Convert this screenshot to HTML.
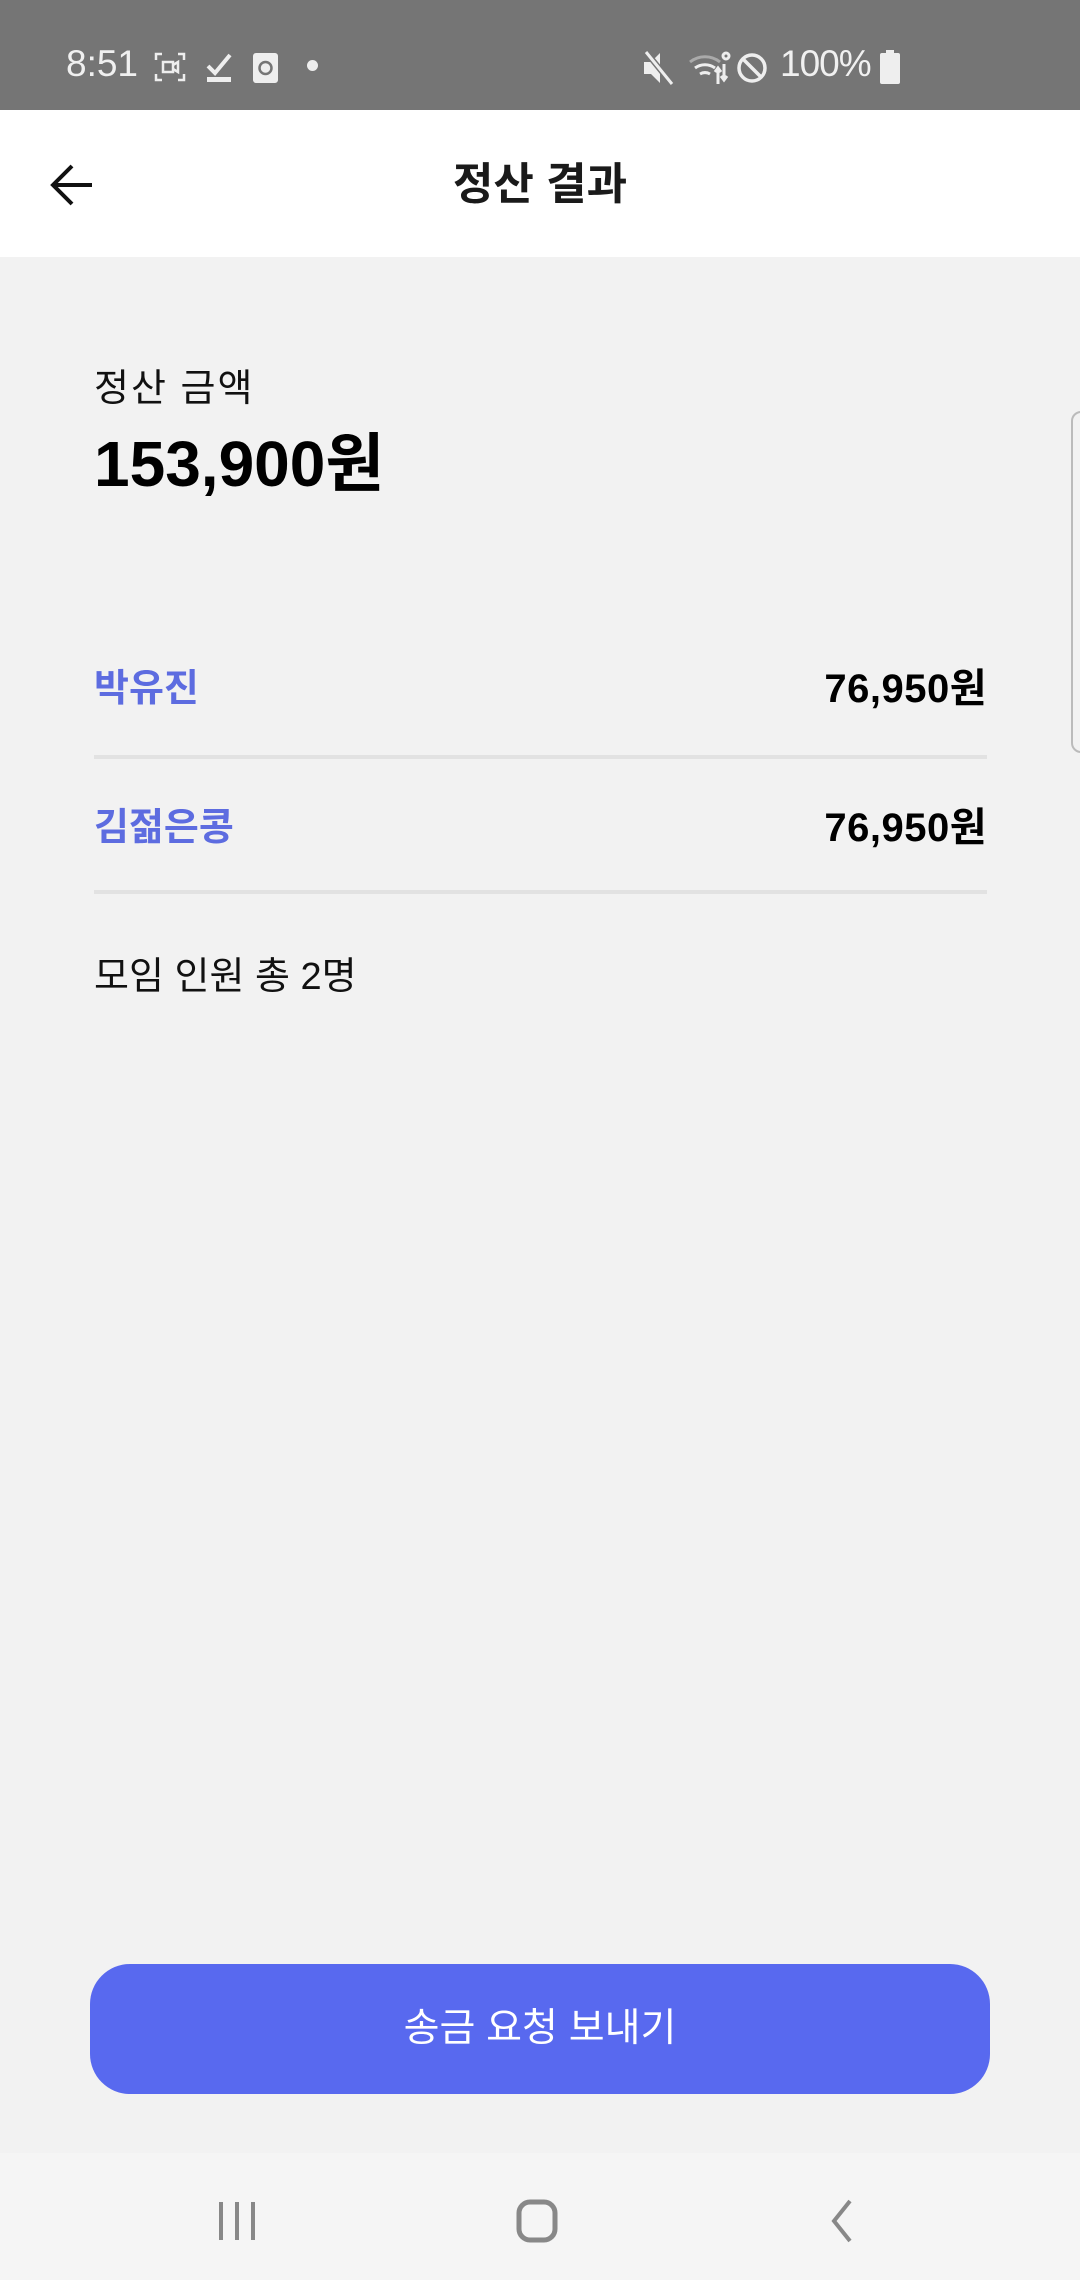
<!DOCTYPE html>
<html><head><meta charset="utf-8"><style>
*{margin:0;padding:0;box-sizing:border-box}
body{width:1080px;height:2280px;background:#f2f2f2;font-family:"Liberation Sans","Noto Sans CJK KR",sans-serif;position:relative;overflow:hidden}
.abs{position:absolute;white-space:nowrap}
</style></head><body>
<div class="abs" style="left:0;top:0;width:1080px;height:110px;background:#757575"></div>
<div class="abs" style="left:66px;top:44px;color:#f0f0f0;font-size:37px;line-height:40px">8:51</div>
<svg class="abs" style="left:154px;top:52px" width="32" height="30" viewBox="0 0 32 30" fill="none" stroke="#eee" stroke-width="2.5"><path d="M2 8V2h6M24 2h6v6M30 22v6h-6M8 28H2v-6"/><rect x="9" y="10" width="10" height="10"/><path d="M19 13l5-3v10l-5-3"/></svg>
<svg class="abs" style="left:205px;top:52px" width="30" height="32" viewBox="0 0 30 32"><path d="M3 14l7 7L25 3" fill="none" stroke="#eee" stroke-width="4"/><rect x="2" y="25" width="24" height="5" fill="#eee"/></svg>
<svg class="abs" style="left:252px;top:52px" width="28" height="32" viewBox="0 0 28 32"><rect x="1" y="1" width="25" height="30" rx="3" fill="#eee"/><circle cx="13.5" cy="16" r="6" fill="none" stroke="#757575" stroke-width="2.5"/></svg>
<div class="abs" style="left:307px;top:60px;width:11px;height:11px;border-radius:50%;background:#eee"></div>
<svg class="abs" style="left:642px;top:50px" width="34" height="36" viewBox="0 0 34 36" fill="#eee"><path d="M2 12h7l9-9v30l-9-9H2z"/><path d="M4 2l26 32" stroke="#757575" stroke-width="6"/><path d="M4 2l26 32" stroke="#eee" stroke-width="3"/></svg>
<svg class="abs" style="left:688px;top:50px" width="44" height="36" viewBox="0 0 44 36" fill="none" stroke="#eee" stroke-width="3"><path d="M2 12a24 24 0 0 1 30 0" stroke="#aaa"/><path d="M7 18a17 17 0 0 1 20 0M12 24a10 10 0 0 1 10 0"/><path d="M30 18v16M27 22l3-4 3 4M36 14v16M33 26l3 4 3-4"/><circle cx="38" cy="6" r="3"/></svg>
<svg class="abs" style="left:735px;top:50px" width="34" height="36" viewBox="0 0 34 36" fill="none" stroke="#eee" stroke-width="3.5"><circle cx="17" cy="18" r="13"/><path d="M8 9l18 18"/></svg>
<div class="abs" style="left:780px;top:44px;color:#f0f0f0;font-size:37px;line-height:40px;letter-spacing:-1px">100%</div>
<svg class="abs" style="left:880px;top:50px" width="20" height="34" viewBox="0 0 20 34"><rect x="6" y="0" width="8" height="4" fill="#eee"/><rect x="0" y="3" width="20" height="31" rx="2" fill="#eee"/></svg>

<div class="abs" style="left:0;top:110px;width:1080px;height:147px;background:#fff"></div>
<svg class="abs" style="left:48px;top:162px" width="48" height="46" viewBox="0 0 48 46" fill="none" stroke="#111" stroke-width="4"><path d="M44 23H6M24 4L5 23l19 19"/></svg>
<div class="abs" style="left:0;width:1080px;top:159px;text-align:center;font-size:44px;font-weight:bold;color:#1a1a1a;line-height:52px">정산 결과</div>

<div class="abs" style="left:94px;top:366px;font-size:38px;letter-spacing:2px;color:#111;line-height:46px">정산 금액</div>
<div class="abs" style="left:94px;top:428px;font-size:64px;font-weight:bold;color:#000;line-height:72px">153,900원</div>

<div class="abs" style="left:1071px;top:411px;width:20px;height:342px;border:2px solid #bbb;border-radius:12px;background:#f2f2f2"></div>

<div class="abs" style="left:94px;top:666px;font-size:38px;font-weight:bold;color:#5d6ce0;line-height:46px">박유진</div>
<div class="abs" style="right:93px;top:666px;font-size:40px;font-weight:bold;color:#000;line-height:46px;letter-spacing:0.5px">76,950원</div>
<div class="abs" style="left:94px;top:755px;width:893px;height:4px;background:#e2e2e2"></div>
<div class="abs" style="left:94px;top:805px;font-size:38px;font-weight:bold;color:#5d6ce0;line-height:46px">김젊은콩</div>
<div class="abs" style="right:93px;top:805px;font-size:40px;font-weight:bold;color:#000;line-height:46px;letter-spacing:0.5px">76,950원</div>
<div class="abs" style="left:94px;top:890px;width:893px;height:4px;background:#e2e2e2"></div>
<div class="abs" style="left:94px;top:954px;font-size:38px;color:#111;line-height:46px">모임 인원 총 2명</div>

<div class="abs" style="left:90px;top:1964px;width:900px;height:130px;border-radius:40px;background:#5869ef;color:#fff;font-size:39px;text-align:center;line-height:130px">송금 요청 보내기</div>

<div class="abs" style="left:0;top:2153px;width:1080px;height:127px;background:#f5f5f5"></div>
<svg class="abs" style="left:215px;top:2200px" width="44" height="42" viewBox="0 0 44 42" fill="none" stroke="#888" stroke-width="4"><path d="M6 2v38M22 2v38M38 2v38"/></svg>
<svg class="abs" style="left:515px;top:2198px" width="48" height="46" viewBox="0 0 48 46" fill="none" stroke="#888" stroke-width="5"><rect x="4" y="4" width="36" height="38" rx="11"/></svg>
<svg class="abs" style="left:826px;top:2198px" width="30" height="46" viewBox="0 0 30 46" fill="none" stroke="#888" stroke-width="4"><path d="M24 3L8 23l16 20"/></svg>
</body></html>
